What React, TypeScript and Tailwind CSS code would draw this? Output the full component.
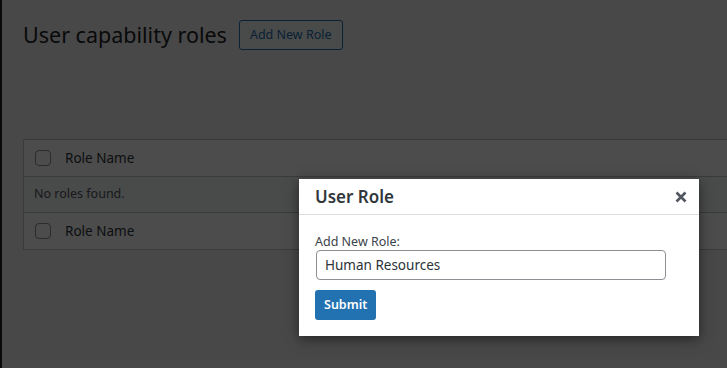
import React from "react";

function Checkbox() {
  return <span className="block h-4 w-4 rounded-[4px] border border-[#8c8f94] bg-white" />;
}

export default function App() {
  return (
    <div
      className="relative h-[368px] w-[727px] overflow-hidden bg-[#f0f0f1] text-[#3c434a]"
      style={{ fontFamily: '"Noto Sans", "Open Sans", sans-serif' }}
    >
      <div className="flex h-full">
        <div className="w-[2px] shrink-0 bg-[#1d2327]" />
        <div className="flex-1 pl-[21px]">
          <div className="flex items-center gap-3 pt-[20px]">
            <h1 className="text-[21.5px] leading-[28px] font-normal text-[#1d2327]">User capability roles</h1>
            <button className="h-[30px] rounded-[3px] border border-[#2271b1] bg-[#f6f7f7] px-[10px] text-[12.5px] text-[#2271b1]">
              Add New Role
            </button>
          </div>
          <div className="mt-[89px] border border-r-0 border-[#c3c4c7] bg-white text-[13.5px] text-[#2c3338]">
            <div className="flex h-[37px] items-center gap-[14px] border-b border-[#c3c4c7] pl-[11px]">
              <Checkbox />
              <span>Role Name</span>
            </div>
            <div className="flex h-[36px] items-center border-b border-[#c3c4c7] bg-[#f6f7f7] pl-[10px] text-[12.5px] text-[#50575e]">
              No roles found.
            </div>
            <div className="flex h-[36px] items-center gap-[14px] pl-[11px]">
              <Checkbox />
              <span>Role Name</span>
            </div>
          </div>
        </div>
      </div>

      <div className="absolute inset-0 bg-black/70" />

      <div className="absolute left-[299px] top-[179px] w-[400px] bg-white shadow-[0_3px_12px_rgba(0,0,0,0.5)]">
        <div className="flex h-[36px] items-center justify-between border-b border-[#dcdcde] pl-[16px] pr-[12px]">
          <span className="text-[17px] font-semibold text-[#32373c]">User Role</span>
          <svg width="12" height="12" viewBox="0 0 12 12" className="text-[#50575e]">
            <path d="M1.5 1.5 L10.5 10.5 M10.5 1.5 L1.5 10.5" stroke="currentColor" strokeWidth="2.6" strokeLinecap="butt" />
          </svg>
        </div>
        <div className="px-[16px] pt-[19px] pb-[16px]">
          <label className="block text-[12.5px] leading-[15px] text-[#3c434a]">Add New Role:</label>
          <div className="mt-[1px] ml-[1px] flex h-[30px] w-[350px] items-center rounded-[4px] border border-[#8c8f94] px-[8px] text-[13.5px] text-[#2c3338]">
            Human Resources
          </div>
          <button className="mt-[10px] h-[30px] rounded-[3px] bg-[#2271b1] px-[9px] text-[12.5px] font-semibold text-white">
            Submit
          </button>
        </div>
      </div>
    </div>
  );
}
